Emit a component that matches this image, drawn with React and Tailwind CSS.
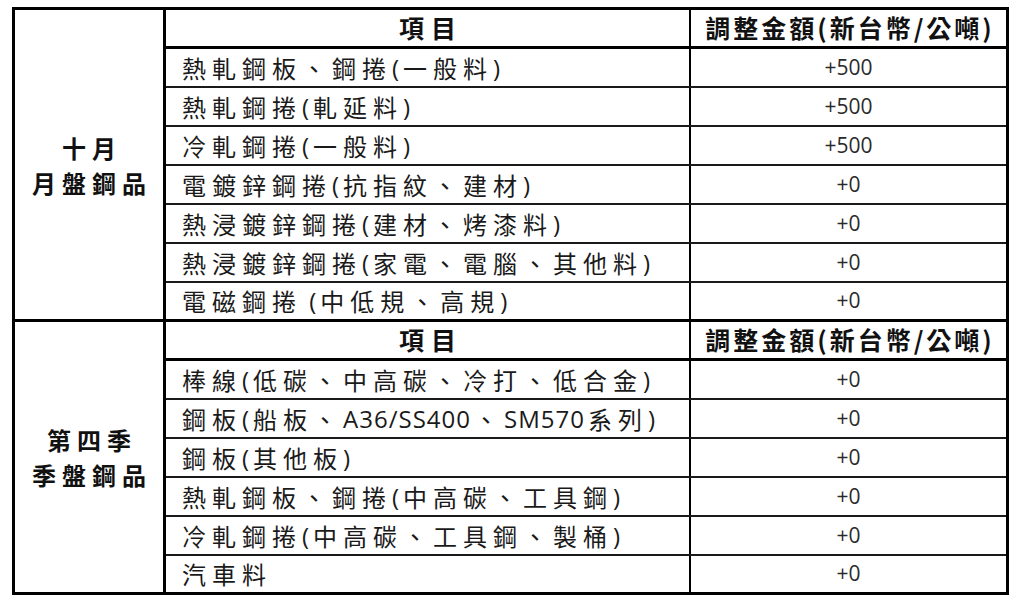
import React from "react";

const cjk = { fontFamily: '"Noto Sans CJK TC", "Noto Sans CJK SC", sans-serif' };
const latin = { fontFamily: '"Open Sans", sans-serif' };

function Mixed({ text }) {
  const parts = [];
  const re = /([\x20-\x7e]+)|([^\x20-\x7e]+)/g;
  let m;
  let k = 0;
  while ((m = re.exec(text))) {
    if (m[1]) {
      parts.push(
        <span key={k++} className="tracking-[1px] text-[24px] mr-[3px] whitespace-pre" style={latin}>
          {m[1]}
        </span>
      );
    } else {
      parts.push(<span key={k++}>{m[2]}</span>);
    }
  }
  return <>{parts}</>;
}

const sections = [
  {
    label: ["十月", "月盤鋼品"],
    rows: [
      ["熱軋鋼板、鋼捲(一般料)", "+500"],
      ["熱軋鋼捲(軋延料)", "+500"],
      ["冷軋鋼捲(一般料)", "+500"],
      ["電鍍鋅鋼捲(抗指紋、建材)", "+0"],
      ["熱浸鍍鋅鋼捲(建材、烤漆料)", "+0"],
      ["熱浸鍍鋅鋼捲(家電、電腦、其他料)", "+0"],
      ["電磁鋼捲 (中低規、高規)", "+0"],
    ],
  },
  {
    label: ["第四季", "季盤鋼品"],
    rows: [
      ["棒線(低碳、中高碳、冷打、低合金)", "+0"],
      ["鋼板(船板、A36/SS400、SM570系列)", "+0"],
      ["鋼板(其他板)", "+0"],
      ["熱軋鋼板、鋼捲(中高碳、工具鋼)", "+0"],
      ["冷軋鋼捲(中高碳、工具鋼、製桶)", "+0"],
      ["汽車料", "+0"],
    ],
  },
];

function Section({ section, last }) {
  return (
    <div className={`flex ${last ? "" : "border-b-[3px] border-black"}`}>
      <div
        className="w-[151px] shrink-0 border-r-[3px] border-black flex flex-col items-center justify-center text-[24px] font-bold leading-[35px] text-[#111]"
        style={cjk}
      >
        <div className="tracking-[6px] pl-[6px]">{section.label[0]}</div>
        <div className="tracking-[6px] pl-[6px]">{section.label[1]}</div>
      </div>
      <div className="flex-1 flex flex-col">
        <div className="flex h-[39px] border-b-[3px] border-black">
          <div
            className="w-[525px] shrink-0 border-r-2 border-black flex items-center justify-center text-[25px] font-bold text-[#111] tracking-[7px] pl-[7px]"
            style={cjk}
          >
            項目
          </div>
          <div
            className="flex-1 flex items-center justify-center text-[25px] font-bold text-[#111] tracking-[3px] pl-[3px] whitespace-nowrap"
            style={cjk}
          >
            調整金額(新台幣/公噸)
          </div>
        </div>
        {section.rows.map((r, i) => {
          const isLast = i === section.rows.length - 1;
          return (
            <div
              key={i}
              className={`flex ${isLast ? "h-[36px]" : "h-[39px] border-b-2 border-[#1a1a1a]"}`}
            >
              <div
                className="w-[525px] shrink-0 border-r-2 border-black flex items-center pl-[16px] text-[24px] text-[#1a1a1a] tracking-[6px] whitespace-nowrap"
                style={cjk}
              >
                <Mixed text={r[0]} />
              </div>
              <div
                className="flex-1 flex items-center justify-center text-[21px] text-[#2a2a2a]"
                style={latin}
              >
                {r[1]}
              </div>
            </div>
          );
        })}
      </div>
    </div>
  );
}

export default function App() {
  return (
    <div className="w-[1024px] h-[612px] bg-white pt-[7px] pl-[12px]">
      <div className="w-[997px] border-[3px] border-black flex flex-col">
        {sections.map((s, i) => (
          <Section key={i} section={s} last={i === sections.length - 1} />
        ))}
      </div>
    </div>
  );
}
